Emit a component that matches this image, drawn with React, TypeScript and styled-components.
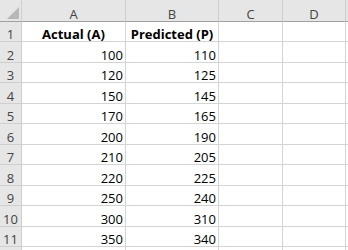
import React from "react";
import styled, { createGlobalStyle } from "styled-components";

const Global = createGlobalStyle`
  html, body { margin: 0; padding: 0; background: #ffffff; }
  body { overflow: hidden; font-family: "Open Sans", "Noto Sans", sans-serif; }
`;

const COLS = [22, 104, 93, 64, 63, 60];
const HEADER_H = 22;
const ROW_H = [20, 21, 20, 21, 20, 21, 20, 21, 20, 21, 20, 21];

const Sheet = styled.div`
  display: grid;
  grid-template-columns: ${COLS.map((c) => c + "px").join(" ")};
  width: 348px;
  height: 250px;
  overflow: hidden;
  font-size: 13px;
  line-height: 13px;
`;

const Corner = styled.div`
  position: relative;
  height: ${HEADER_H}px;
  box-sizing: border-box;
  background: #e6e6e6;
  border-right: 1px solid #cfcfcf;
  border-bottom: 1px solid #a0a0a0;
`;

const Triangle = styled.div`
  position: absolute;
  right: 2px;
  bottom: 2px;
  width: 0;
  height: 0;
  border-left: 12px solid transparent;
  border-bottom: 12px solid #b7b7b7;
`;

const ColHead = styled.div`
  height: ${HEADER_H}px;
  box-sizing: border-box;
  background: #e6e6e6;
  border-right: 1px solid #cfcfcf;
  border-bottom: 1px solid #a0a0a0;
  color: #444444;
  display: flex;
  align-items: flex-end;
  justify-content: center;
  padding-bottom: 0;
`;

const RowHead = styled.div<{ $h: number }>`
  height: ${(p) => p.$h}px;
  box-sizing: border-box;
  background: #e6e6e6;
  border-right: 1px solid #cfcfcf;
  border-bottom: 1px solid #cfcfcf;
  color: #444444;
  display: flex;
  align-items: flex-end;
  justify-content: center;
`;

const Cell = styled.div<{ $h: number; $bold?: boolean; $num?: boolean }>`
  height: ${(p) => p.$h}px;
  box-sizing: border-box;
  border-right: 1px solid #d4d4d4;
  border-bottom: 1px solid #d4d4d4;
  color: #000000;
  display: flex;
  align-items: flex-end;
  justify-content: ${(p) => (p.$bold ? "center" : p.$num ? "flex-end" : "flex-start")};
  padding: 0 2px;
  font-weight: ${(p) => (p.$bold ? 700 : 400)};
  white-space: nowrap;
  overflow: hidden;
`;

const data: [number, number][] = [
  [100, 110],
  [120, 125],
  [150, 145],
  [170, 165],
  [200, 190],
  [210, 205],
  [220, 225],
  [250, 240],
  [300, 310],
  [350, 340],
];

export default function App() {
  const letters = ["A", "B", "C", "D", ""];
  const rows: React.ReactNode[] = [];
  for (let i = 0; i < 12; i++) {
    const h = ROW_H[i];
    let cells: (string | number)[] = ["", "", "", "", ""];
    let bold = false;
    if (i === 0) {
      cells = ["Actual (A)", "Predicted (P)", "", "", ""];
      bold = true;
    } else if (i <= 10) {
      cells = [data[i - 1][0], data[i - 1][1], "", "", ""];
    }
    rows.push(
      <React.Fragment key={i}>
        <RowHead $h={h}>{i < 11 ? i + 1 : ""}</RowHead>
        {cells.map((c, j) => (
          <Cell key={j} $h={h} $bold={bold && j < 2} $num={typeof c === "number"}>
            {c}
          </Cell>
        ))}
      </React.Fragment>
    );
  }
  return (
    <>
      <Global />
      <Sheet>
        <Corner>
          <Triangle />
        </Corner>
        {letters.map((l, i) => (
          <ColHead key={i}>{l}</ColHead>
        ))}
        {rows}
      </Sheet>
    </>
  );
}
